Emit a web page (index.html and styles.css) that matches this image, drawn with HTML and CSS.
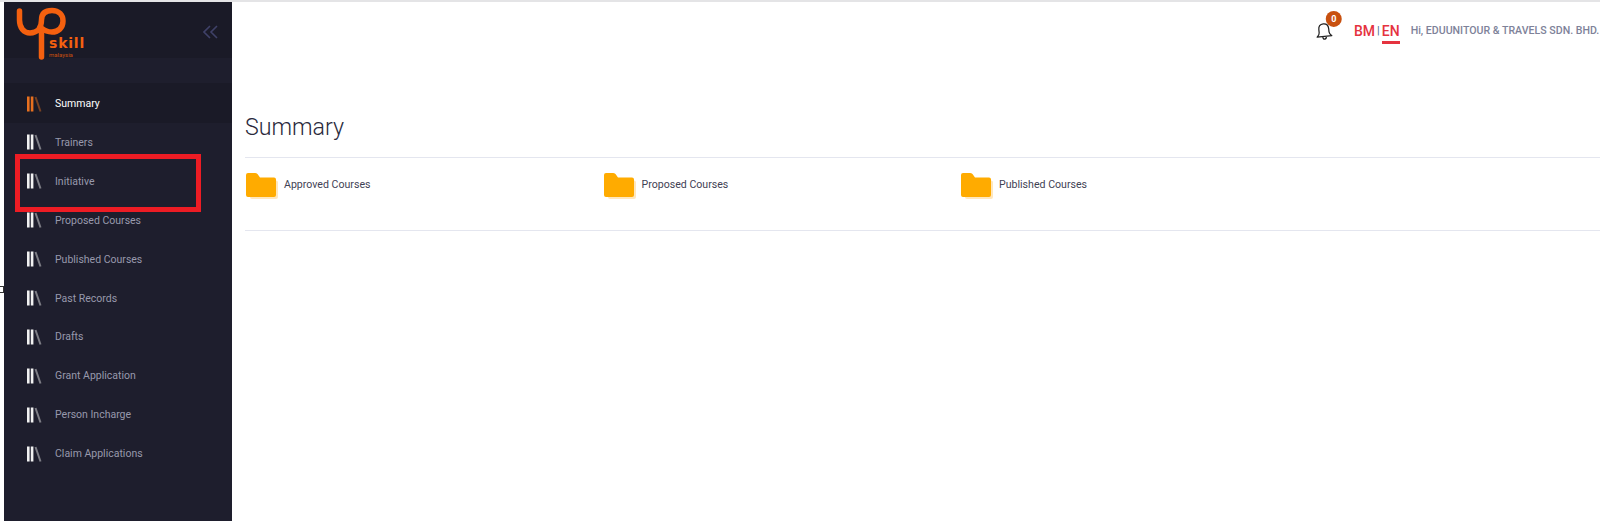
FILE: index.html
```html
<!DOCTYPE html>
<html lang="en">
<head>
    <meta charset="UTF-8" />
    <title>Summary</title>
    <link rel="stylesheet" href="styles.css">
</head>
<body>

    <div class="stray-mark"></div>
    <div class="highlight-box"></div>

    <aside class="sidebar">
        <div class="brand">
            <div class="logo">
                <svg width="70" height="62" viewBox="0 0 70 62">
                    <path d="M19.5 11 V20 C19.5 28 24 33 30 33 C37 33 41.5 28 41.5 20 C41.5 13 46 10.5 52 10.5 C59 10.5 63 15 63 21 C63 28 58 32 52 32 C48 32 45 31 41.5 28 V57" fill="none" stroke="#f4600f" stroke-width="5.5" stroke-linecap="round" />
                </svg>
                <span class="logo-skill">skill</span>
                <span class="logo-country">malaysia</span>
            </div>
            <svg class="collapse" width="15" height="14" viewBox="0 0 15 14">
                <path d="M7 1 L1 7 L7 13 M14 1 L8 7 L14 13" fill="none" stroke="#3f4168" stroke-width="1.6" />
            </svg>
        </div>

        <nav class="menu">
            <a class="menu-item active">
                <svg class="menu-icon" width="16" height="16" viewBox="0 0 16 16"><path d="M1 .5h2.6v15H1zM4.8 .5h2.6v15H4.8z" fill="currentColor" /><path d="M9.5 1 L14.5 15.5" stroke="currentColor" stroke-opacity=".45" stroke-width="2" /></svg>
                Summary
            </a>
            <a class="menu-item">
                <svg class="menu-icon" width="16" height="16" viewBox="0 0 16 16"><path d="M1 .5h2.6v15H1zM4.8 .5h2.6v15H4.8z" fill="currentColor" /><path d="M9.5 1 L14.5 15.5" stroke="currentColor" stroke-opacity=".45" stroke-width="2" /></svg>
                Trainers
            </a>
            <a class="menu-item">
                <svg class="menu-icon" width="16" height="16" viewBox="0 0 16 16"><path d="M1 .5h2.6v15H1zM4.8 .5h2.6v15H4.8z" fill="currentColor" /><path d="M9.5 1 L14.5 15.5" stroke="currentColor" stroke-opacity=".45" stroke-width="2" /></svg>
                Initiative
            </a>
            <a class="menu-item">
                <svg class="menu-icon" width="16" height="16" viewBox="0 0 16 16"><path d="M1 .5h2.6v15H1zM4.8 .5h2.6v15H4.8z" fill="currentColor" /><path d="M9.5 1 L14.5 15.5" stroke="currentColor" stroke-opacity=".45" stroke-width="2" /></svg>
                Proposed Courses
            </a>
            <a class="menu-item">
                <svg class="menu-icon" width="16" height="16" viewBox="0 0 16 16"><path d="M1 .5h2.6v15H1zM4.8 .5h2.6v15H4.8z" fill="currentColor" /><path d="M9.5 1 L14.5 15.5" stroke="currentColor" stroke-opacity=".45" stroke-width="2" /></svg>
                Published Courses
            </a>
            <a class="menu-item">
                <svg class="menu-icon" width="16" height="16" viewBox="0 0 16 16"><path d="M1 .5h2.6v15H1zM4.8 .5h2.6v15H4.8z" fill="currentColor" /><path d="M9.5 1 L14.5 15.5" stroke="currentColor" stroke-opacity=".45" stroke-width="2" /></svg>
                Past Records
            </a>
            <a class="menu-item">
                <svg class="menu-icon" width="16" height="16" viewBox="0 0 16 16"><path d="M1 .5h2.6v15H1zM4.8 .5h2.6v15H4.8z" fill="currentColor" /><path d="M9.5 1 L14.5 15.5" stroke="currentColor" stroke-opacity=".45" stroke-width="2" /></svg>
                Drafts
            </a>
            <a class="menu-item">
                <svg class="menu-icon" width="16" height="16" viewBox="0 0 16 16"><path d="M1 .5h2.6v15H1zM4.8 .5h2.6v15H4.8z" fill="currentColor" /><path d="M9.5 1 L14.5 15.5" stroke="currentColor" stroke-opacity=".45" stroke-width="2" /></svg>
                Grant Application
            </a>
            <a class="menu-item">
                <svg class="menu-icon" width="16" height="16" viewBox="0 0 16 16"><path d="M1 .5h2.6v15H1zM4.8 .5h2.6v15H4.8z" fill="currentColor" /><path d="M9.5 1 L14.5 15.5" stroke="currentColor" stroke-opacity=".45" stroke-width="2" /></svg>
                Person Incharge
            </a>
            <a class="menu-item">
                <svg class="menu-icon" width="16" height="16" viewBox="0 0 16 16"><path d="M1 .5h2.6v15H1zM4.8 .5h2.6v15H4.8z" fill="currentColor" /><path d="M9.5 1 L14.5 15.5" stroke="currentColor" stroke-opacity=".45" stroke-width="2" /></svg>
                Claim Applications
            </a>
        </nav>
    </aside>

    <main class="content">
        <header class="topbar">
            <div class="bell">
                <svg width="18" height="21" viewBox="0 0 20 22">
                    <path d="M10 2.5 C6 2.5 4.5 5.5 4.5 8.5 V12 C4.5 14 3.5 15 1.8 16.5 H18.2 C16.5 15 15.5 14 15.5 12 V8.5 C15.5 5.5 14 2.5 10 2.5 Z M8 16.5 C8 20.5 12 20.5 12 16.5" fill="none" stroke="#222" stroke-width="1.4" stroke-linejoin="round" />
                </svg>
                <span class="badge">0</span>
            </div>
            <div class="lang">
                <span>BM</span>
                <span class="lang-sep">|</span>
                <span class="lang-current">EN</span>
            </div>
            <div class="greeting">Hi, EDUUNITOUR &amp; TRAVELS SDN. BHD.</div>
        </header>

        <h1 class="page-title">Summary</h1>

        <section class="folders">
            <div class="folder">
                <svg class="folder-icon" width="32" height="26" viewBox="0 0 32 26"><path d="M3 3 H9 Q10.5 3 11.5 4 L14 6.5 H28 Q30 6.5 30 8.5 V23 Q30 25 28 25 H4 Q2 25 2 23 V4 Q2 3 3 3 Z" fill="#ffe7bd" transform="translate(2 1)" /><path d="M2 0 H9 Q10.5 0 11.5 1 L14 4.5 H28 Q30 4.5 30 6.5 V22 Q30 24 28 24 H2 Q0 24 0 22 V2 Q0 0 2 0 Z" fill="#ffab00" /></svg>
                <span>Approved Courses</span>
            </div>
            <div class="folder">
                <svg class="folder-icon" width="32" height="26" viewBox="0 0 32 26"><path d="M3 3 H9 Q10.5 3 11.5 4 L14 6.5 H28 Q30 6.5 30 8.5 V23 Q30 25 28 25 H4 Q2 25 2 23 V4 Q2 3 3 3 Z" fill="#ffe7bd" transform="translate(2 1)" /><path d="M2 0 H9 Q10.5 0 11.5 1 L14 4.5 H28 Q30 4.5 30 6.5 V22 Q30 24 28 24 H2 Q0 24 0 22 V2 Q0 0 2 0 Z" fill="#ffab00" /></svg>
                <span>Proposed Courses</span>
            </div>
            <div class="folder">
                <svg class="folder-icon" width="32" height="26" viewBox="0 0 32 26"><path d="M3 3 H9 Q10.5 3 11.5 4 L14 6.5 H28 Q30 6.5 30 8.5 V23 Q30 25 28 25 H4 Q2 25 2 23 V4 Q2 3 3 3 Z" fill="#ffe7bd" transform="translate(2 1)" /><path d="M2 0 H9 Q10.5 0 11.5 1 L14 4.5 H28 Q30 4.5 30 6.5 V22 Q30 24 28 24 H2 Q0 24 0 22 V2 Q0 0 2 0 Z" fill="#ffab00" /></svg>
                <span>Published Courses</span>
            </div>
        </section>
    </main>

</body>
</html>
```

FILE: styles.css
```css
html, body {
    height: 100%;
}

body {
    margin: 0;
    padding: 2px 0 0 4px;
    box-sizing: border-box;
    display: flex;
    overflow: hidden;
    font-family: "Roboto", "Liberation Sans", sans-serif;
    background-color: #fff;
    box-shadow: inset 0 2px 0 #e4e4e6;
}

/* sidebar */
.sidebar {
    width: 228px;
    flex-shrink: 0;
    background-color: #1e1e2d;
}

.brand {
    height: 56px;
    background-color: #1a1a27;
    display: flex;
    align-items: flex-start;
    justify-content: space-between;
    padding-right: 14px;
}

.logo {
    position: relative;
    width: 80px;
    height: 56px;
    margin-left: -4px;
    margin-top: -2px;
}

.logo svg {
    display: block;
}

.logo-skill {
    position: absolute;
    left: 49px;
    top: 35px;
    font-family: "DejaVu Sans", sans-serif;
    font-size: 14px;
    font-weight: bold;
    letter-spacing: 0.8px;
    color: #f4600f;
}

.logo-country {
    position: absolute;
    left: 49px;
    top: 51px;
    font-size: 6px;
    color: #c9500f;
}

.collapse {
    margin-top: 23px;
}

.menu {
    padding-top: 25px;
}

.menu-item {
    display: flex;
    align-items: center;
    box-sizing: border-box;
    height: 38.9px;
    padding: 2px 0 0 22px;
    font-size: 10.5px;
    color: #9899ac;
}

.menu-item.active {
    height: 40px;
    margin-bottom: -0.5px;
    margin-top: -0.5px;
    background-color: #1a1a27;
    color: #fff;
}

.menu-item.active .menu-icon {
    color: #e8701f;
}

.menu-icon {
    width: 16px;
    height: 16px;
    margin-right: 13px;
    color: #f2f2f2;
}

/* overlays from the annotation on the shot */
.highlight-box {
    position: absolute;
    left: 15px;
    top: 154px;
    width: 176px;
    height: 48px;
    border: 5px solid #ed1c24;
    z-index: 5;
}

.stray-mark {
    position: absolute;
    left: 0;
    top: 286px;
    width: 3px;
    height: 5px;
    border: 1px solid #333;
    border-left: 0;
}

/* main area */
.content {
    flex: 1;
    min-width: 0;
    padding-left: 13px;
    white-space: nowrap;
}

.topbar {
    height: 57px;
    display: flex;
    align-items: center;
    padding-left: 1070px;
}

.bell {
    position: relative;
    width: 18px;
    height: 21px;
    margin-top: 1px;
    transform: rotate(-6deg);
}

.badge {
    position: absolute;
    left: 12px;
    top: -9px;
    width: 16px;
    height: 16px;
    border-radius: 50%;
    background-color: #c8500f;
    color: #fff;
    font-size: 9px;
    font-weight: bold;
    line-height: 16px;
    text-align: center;
    transform: rotate(6deg);
}

.lang {
    display: flex;
    align-items: center;
    gap: 2px;
    margin-left: 21px;
    font-size: 14px;
    font-weight: 500;
    color: #e5333f;
}

.lang-sep {
    font-size: 11px;
    font-weight: 400;
    color: #4a6a8a;
}

.lang-current {
    padding-bottom: 2px;
    margin-bottom: -5px;
    border-bottom: 3px solid #e5333f;
}

.greeting {
    margin-left: 11px;
    font-size: 10.6px;
    font-weight: 500;
    color: #7e8299;
}

.page-title {
    margin: 0;
    padding: 54px 0 16px;
    font-size: 23.2px;
    font-weight: 300;
    line-height: 28px;
    color: #2a2a3c;
    border-bottom: 1px solid #e4e6ef;
}

.folders {
    display: flex;
    height: 73px;
    padding-top: 15px;
    box-sizing: border-box;
    border-bottom: 1px solid #e4e6ef;
}

.folder {
    display: flex;
    align-items: flex-start;
    width: 357.5px;
    padding-left: 1px;
    box-sizing: border-box;
    font-size: 10.6px;
    color: #3f4254;
}

.folder-icon {
    margin-right: 6px;
}

.folder span {
    line-height: 24px;
}
```
